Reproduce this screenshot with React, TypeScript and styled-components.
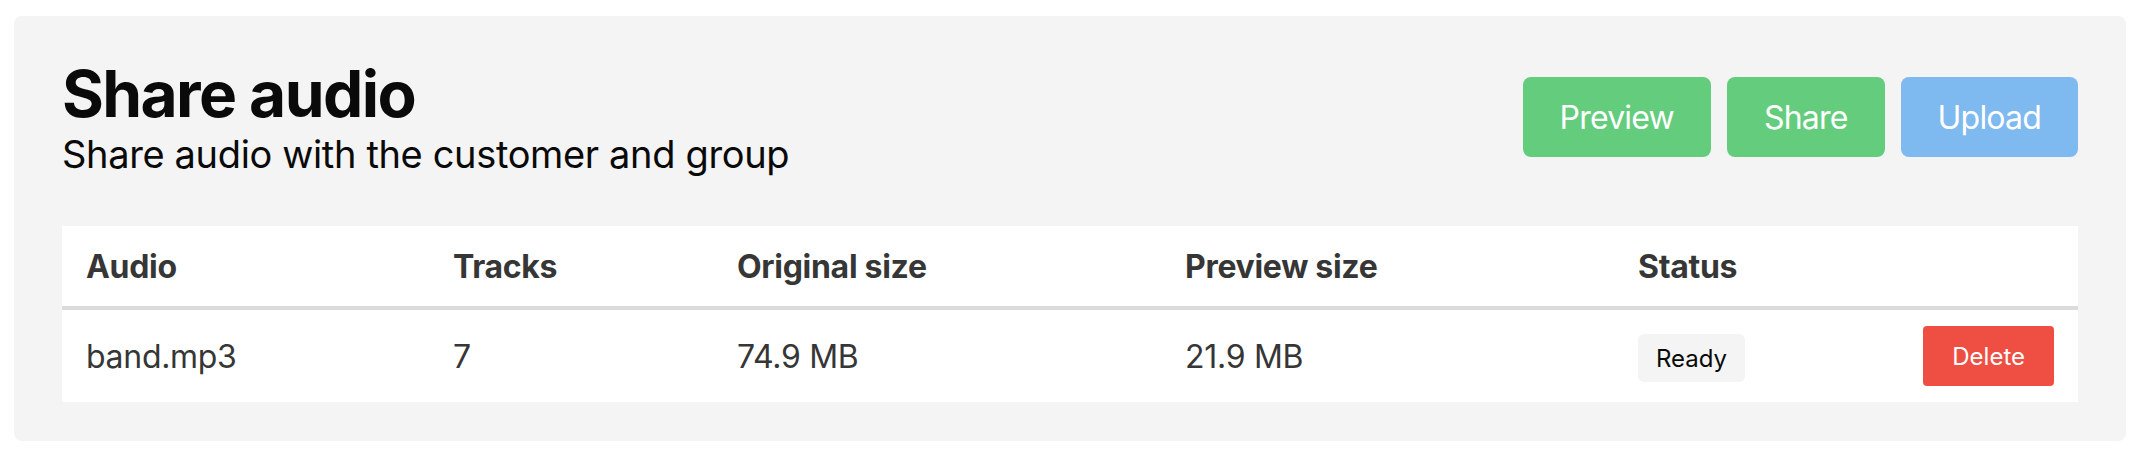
import React from 'react';
import styled, { createGlobalStyle } from 'styled-components';

const GlobalStyle = createGlobalStyle`
  body {
    margin: 0;
    background: #ffffff;
    font-family: 'Inter', 'Noto Sans', sans-serif;
  }
`;

const Card = styled.section`
  margin: 16px 22px 0 14px;
  padding: 48px 48px 39px;
  background: #f4f4f4;
  border-radius: 8px;
`;

const Header = styled.header`
  display: flex;
  justify-content: space-between;
  align-items: flex-start;
  margin-bottom: 49px;
`;

const Title = styled.h1`
  margin: 0;
  font-size: 64px;
  line-height: 60px;
  font-weight: 700;
  letter-spacing: -1.6px;
  color: #0a0a0a;
`;

const Subtitle = styled.p`
  margin: 7px 0 0;
  font-size: 38px;
  line-height: 46px;
  font-weight: 400;
  letter-spacing: -0.35px;
  color: #0a0a0a;
`;

const Actions = styled.div`
  display: flex;
  gap: 16px;
  margin-top: 13px;
`;

const Button = styled.button<{ $tone: 'green' | 'blue' }>`
  height: 80px;
  padding: 0 37px;
  border: none;
  border-radius: 8px;
  background: ${(p) => (p.$tone === 'green' ? '#63cd7d' : '#7eb9ef')};
  color: #ffffff;
  font-family: inherit;
  font-size: 32px;
  font-weight: 400;
  letter-spacing: -0.8px;
`;

const Table = styled.div`
  background: #ffffff;
`;

const Row = styled.div<{ $head?: boolean }>`
  display: grid;
  grid-template-columns: 367px 284px 448px 453px 1fr auto;
  align-items: center;
  height: ${(p) => (p.$head ? '80px' : '92px')};
  border-bottom: ${(p) => (p.$head ? '4px solid #dbdbdb' : 'none')};
  color: #363636;
  font-size: 32px;
  font-weight: ${(p) => (p.$head ? 700 : 400)};
  letter-spacing: -0.3px;
`;

const Cell = styled.div`
  padding: 0 24px;
  white-space: nowrap;
`;

const Badge = styled.span`
  display: inline-flex;
  align-items: center;
  height: 48px;
  margin-top: 4px;
  padding: 0 18px;
  border-radius: 6px;
  background: #f4f4f4;
  color: #0a0a0a;
  font-size: 24px;
  letter-spacing: 0;
`;

const DeleteButton = styled.button`
  display: block;
  height: 60px;
  padding: 0 29px;
  border: none;
  border-radius: 4px;
  background: #ef4f42;
  color: #ffffff;
  font-family: inherit;
  font-size: 24px;
`;

type AudioFile = {
  name: string;
  tracks: number;
  original: string;
  preview: string;
  status: string;
};

const files: AudioFile[] = [
  { name: 'band.mp3', tracks: 7, original: '74.9 MB', preview: '21.9 MB', status: 'Ready' },
];

const App = () => {
  return (
    <>
      <GlobalStyle />
      <Card>
        <Header>
          <div>
            <Title>Share audio</Title>
            <Subtitle>Share audio with the customer and group</Subtitle>
          </div>
          <Actions>
            <Button $tone="green">Preview</Button>
            <Button $tone="green">Share</Button>
            <Button $tone="blue">Upload</Button>
          </Actions>
        </Header>
        <Table>
          <Row $head>
            <Cell>Audio</Cell>
            <Cell>Tracks</Cell>
            <Cell>Original size</Cell>
            <Cell>Preview size</Cell>
            <Cell>Status</Cell>
            <Cell />
          </Row>
          {files.map((f) => (
            <Row key={f.name}>
              <Cell>{f.name}</Cell>
              <Cell>{f.tracks}</Cell>
              <Cell>{f.original}</Cell>
              <Cell>{f.preview}</Cell>
              <Cell>
                <Badge>{f.status}</Badge>
              </Cell>
              <Cell>
                <DeleteButton>Delete</DeleteButton>
              </Cell>
            </Row>
          ))}
        </Table>
      </Card>
    </>
  );
};

export default App;
